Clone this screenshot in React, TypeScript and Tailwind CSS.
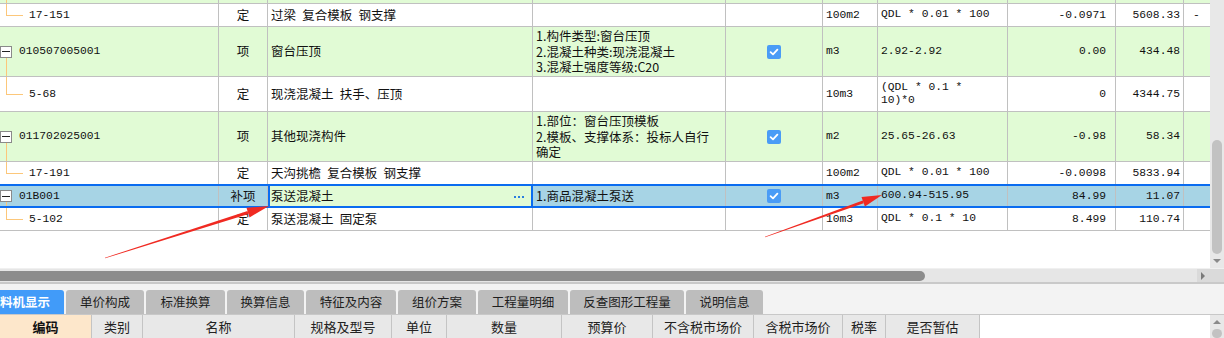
import clsx from "clsx";

const cjk = "font-['Noto_Sans_CJK_SC',sans-serif]";
const mono = "font-['Liberation_Mono','Noto_Sans_CJK_SC',monospace]";

const colW = [
  "w-[219px]",
  "w-[49px]",
  "w-[265px]",
  "w-[193px]",
  "w-[97px]",
  "w-[55px]",
  "w-[130px]",
  "w-[108px]",
  "w-[68px]",
  "w-[26px]",
];

interface Row {
  code: string;
  parent?: boolean;
  type: string;
  name: string;
  feat: string[];
  check?: boolean;
  unit: string;
  formula: string[];
  qty: string;
  price: string;
  last?: string;
  h: string;
  bg: string;
  sel?: boolean;
  noBorder?: boolean;
}

const rows: Row[] = [
  { code: "17-151", type: "定", name: "过梁 复合模板 钢支撑", feat: [], unit: "100m2", formula: ["QDL * 0.01 * 100"], qty: "-0.0971", price: "5608.33", last: "-", h: "h-[23px]", bg: "bg-white" },
  { code: "010507005001", parent: true, type: "项", name: "窗台压顶", feat: ["1.构件类型:窗台压顶", "2.混凝土种类:现浇混凝土", "3.混凝土强度等级:C20"], check: true, unit: "m3", formula: ["2.92-2.92"], qty: "0.00", price: "434.48", h: "h-[50px]", bg: "bg-[#e1fbd5]" },
  { code: "5-68", type: "定", name: "现浇混凝土 扶手、压顶", feat: [], unit: "10m3", formula: ["(QDL * 0.1 *", "10)*0"], qty: "0", price: "4344.75", h: "h-[35px]", bg: "bg-white" },
  { code: "011702025001", parent: true, type: "项", name: "其他现浇构件", feat: ["1.部位：窗台压顶模板", "2.模板、支撑体系：投标人自行", "确定"], check: true, unit: "m2", formula: ["25.65-26.63"], qty: "-0.98", price: "58.34", h: "h-[50px]", bg: "bg-[#e1fbd5]" },
  { code: "17-191", type: "定", name: "天沟挑檐 复合模板 钢支撑", feat: [], unit: "100m2", formula: ["QDL * 0.01 * 100"], qty: "-0.0098", price: "5833.94", h: "h-[22px]", bg: "bg-white", noBorder: true },
  { code: "01B001", parent: true, type: "补项", name: "泵送混凝土", feat: ["1.商品混凝土泵送"], check: true, unit: "m3", formula: ["600.94-515.95"], qty: "84.99", price: "11.07", h: "h-[24px]", bg: "bg-[#a7d4e5]", sel: true },
  { code: "5-102", type: "定", name: "泵送混凝土 固定泵", feat: [], unit: "10m3", formula: ["QDL * 0.1 * 10"], qty: "8.499", price: "110.74", h: "h-[23px]", bg: "bg-white" },
];

function Cell({ i, className, children }: { i: number; className?: string; children?: React.ReactNode }) {
  return (
    <div className={clsx("shrink-0 h-full flex items-center overflow-hidden", i < 9 && "border-r border-[#c0c0c0]", colW[i], className)}>
      {children}
    </div>
  );
}

function Check() {
  return (
    <div className="w-[14px] h-[14px] rounded-[2px] bg-[#4a9cf6] flex items-center justify-center">
      <svg width="10" height="10" viewBox="0 0 10 10">
        <path d="M1.6 5.2 L4 7.4 L8.4 2.6" stroke="white" strokeWidth="1.8" fill="none" strokeLinecap="round" strokeLinejoin="round" />
      </svg>
    </div>
  );
}

// multi-line text kept as one text block
function Lines({ lines }: { lines: string[] }) {
  return (
    <div>
      {lines.map((l, k) => (
        <span key={k}>
          {k > 0 && <br />}
          {l}
        </span>
      ))}
    </div>
  );
}

function CodeCell({ r }: { r: Row }) {
  return (
    <Cell i={0} className="relative">
      {r.parent ? (
        <>
          <div className="absolute left-0 top-1/2 -translate-y-1/2 w-[12px] h-[12px] border border-[#8a8a8a] bg-white flex items-center justify-center">
            <div className="w-[8px] h-px bg-[#222]" />
          </div>
          <div className="absolute left-[6px] top-[calc(50%+6px)] bottom-0 w-px bg-[#fcc77a]" />
          <span className={clsx(mono, "text-[11.3px] text-[#111] pl-[19px]")}>{r.code}</span>
        </>
      ) : (
        <>
          <div className="absolute left-[6px] top-0 h-1/2 w-px bg-[#fcc77a]" />
          <div className="absolute left-[6px] top-1/2 w-[17px] h-px bg-[#fcc77a]" />
          <span className={clsx(mono, "text-[11.3px] text-[#111] pl-[29px]")}>{r.code}</span>
        </>
      )}
    </Cell>
  );
}

function TableRow({ r }: { r: Row }) {
  return (
    <div className={clsx("flex", r.h, r.bg, r.sel ? "border-y-2 border-[#0a6cf0]" : !r.noBorder && "border-b border-[#c0c0c0]")}>
      <CodeCell r={r} />
      <Cell i={1} className={clsx(cjk, "justify-center text-[12.5px] text-[#111]")}>{r.type}</Cell>
      <Cell
        i={2}
        className={clsx(
          cjk,
          "pl-[3px] text-[12.5px] text-[#111] whitespace-pre justify-between",
          r.sel && "bg-[#e1fbd5] shadow-[inset_2px_0_0_#0a6cf0,inset_-1px_0_0_#0a6cf0] border-r-[#0a6cf0]"
        )}
      >
        <span>{r.name.replace(/ /g, "\u2002")}</span>
        {r.sel && (
          <div className="flex gap-[2px] mr-[8px] mt-[1px]">
            <div className="w-[2px] h-[2px] bg-[#2a7ee0]" />
            <div className="w-[2px] h-[2px] bg-[#2a7ee0]" />
            <div className="w-[2px] h-[2px] bg-[#2a7ee0]" />
          </div>
        )}
      </Cell>
      <Cell i={3} className={clsx(cjk, "pl-[3px] text-[12.5px] text-[#111] leading-[15.5px] whitespace-nowrap")}>
        <Lines lines={r.feat} />
      </Cell>
      <Cell i={4} className="justify-center">{r.check && <Check />}</Cell>
      <Cell i={5} className={clsx(mono, "pl-[3px] text-[11.3px] text-[#111]")}>{r.unit}</Cell>
      <Cell i={6} className={clsx(mono, "pl-[3px] text-[11.3px] text-[#111] leading-[13.5px] whitespace-pre")}>
        <Lines lines={r.formula} />
      </Cell>
      <Cell i={7} className={clsx(mono, "justify-end pr-[9px] text-[11.3px] text-[#111]")}>{r.qty}</Cell>
      <Cell i={8} className={clsx(mono, "justify-end pr-[3px] text-[11.3px] text-[#111]")}>{r.price}</Cell>
      <Cell i={9} className={clsx(mono, "pl-[9px] text-[11.3px] text-[#111]")}>{r.last}</Cell>
    </div>
  );
}

const tabs = [
  { label: "单价构成", w: "w-[78px]" },
  { label: "标准换算", w: "w-[79px]" },
  { label: "换算信息", w: "w-[77px]" },
  { label: "特征及内容", w: "w-[90px]" },
  { label: "组价方案", w: "w-[78px]" },
  { label: "工程量明细", w: "w-[90px]" },
  { label: "反查图形工程量", w: "w-[114px]" },
  { label: "说明信息", w: "w-[77px]" },
];

const heads = [
  { label: "类别", w: "w-[51px]" },
  { label: "名称", w: "w-[152px]" },
  { label: "规格及型号", w: "w-[97px]" },
  { label: "单位", w: "w-[55px]" },
  { label: "数量", w: "w-[115px]" },
  { label: "预算价", w: "w-[91px]" },
  { label: "不含税市场价", w: "w-[101px]" },
  { label: "含税市场价", w: "w-[89px]" },
  { label: "税率", w: "w-[43px]" },
  { label: "是否暂估", w: "w-[94px]" },
];

export default function App() {
  return (
    <div className="relative w-[1224px] h-[338px] overflow-hidden bg-white">
      <div className="flex h-[268px]">
        <div className="w-[1210px] overflow-hidden">
          <div className="flex h-[4px] bg-[#e1fbd5] border-b border-[#c0c0c0]">
            {colW.map((_, i) => (
              <Cell key={i} i={i} className="relative">
                {i === 0 && <div className="absolute left-[6px] top-0 bottom-0 w-px bg-[#fcc77a]" />}
              </Cell>
            ))}
          </div>
          {rows.map((r) => (
            <TableRow key={r.code} r={r} />
          ))}
        </div>
        <div className="w-[14px] bg-[#e8e8e8] flex flex-col items-center pt-[140px]">
          <div className="w-[10px] h-[114px] rounded-[5px] bg-[#c2c2c2]" />
          <div className="mt-[5px] w-0 h-0 border-x-[4px] border-x-transparent border-t-[4px] border-t-[#8a8a8a]" />
        </div>
      </div>

      <div className="flex h-[14px] border-t border-[#f0f0f0]">
        <div className="w-[1197px] bg-[#e6e6e6] flex items-center">
          <div className="w-[925px] h-[10px] rounded-r-[5px] bg-[#8c8c8c]" />
        </div>
        <div className="flex-1 bg-[#dadada] flex items-center pl-[4px]">
          <div className="w-0 h-0 border-y-[4px] border-y-transparent border-l-[4px] border-l-[#7a7a7a]" />
        </div>
      </div>
      <div className="h-[2px] bg-[#c9c9c9]" />

      <div className="flex items-end gap-[2px] h-[31px] pt-[6px] bg-[#f3f3f3] border-b border-[#c8c8c8]">
        <div className={clsx(cjk, "w-[64px] h-[24px] rounded-tr-[3px] bg-[#419bf9] text-white font-bold text-[12.5px] flex items-center justify-end pr-[14px] overflow-hidden whitespace-nowrap")}>
          工料机显示
        </div>
        {tabs.map((t) => (
          <div key={t.label} className={clsx(cjk, t.w, "h-[24px] rounded-t-[3px] bg-[#bdbdbd] text-[12.5px] text-[#1e1e1e] flex items-center justify-center whitespace-nowrap")}>
            {t.label}
          </div>
        ))}
      </div>

      <div className="flex h-[23px]">
        <div className={clsx(cjk, "w-[92px] bg-[#fde7cb] border-r border-[#c4c4c4] font-bold text-[13px] text-[#111] flex items-center justify-center")}>编码</div>
        {heads.map((h) => (
          <div key={h.label} className={clsx(cjk, h.w, "bg-[#e8e8e8] border-r border-[#c4c4c4] text-[13px] text-[#222] flex items-center justify-center whitespace-nowrap")}>
            {h.label}
          </div>
        ))}
        <div className="flex-1 bg-white" />
        <div className="w-[14px] bg-[#e8e8e8] flex flex-col items-center pt-[5px]">
          <div className="w-0 h-0 border-x-[4px] border-x-transparent border-b-[4px] border-b-[#8a8a8a]" />
          <div className="mt-[5px] w-[10px] h-[20px] rounded-[5px] bg-[#c2c2c2]" />
        </div>
      </div>

      <svg className="absolute left-0 top-0 pointer-events-none" width="1224" height="338" viewBox="0 0 1224 338">
        <polygon points="105.1,258.3 248.5,214.1 247.5,211.1 104.9,257.7" fill="#f02a22" />
        <polygon points="269,206 249.5,217.4 246.5,207.8" fill="#f02a22" />
        <polygon points="765.1,237.3 863.7,203.2 862.7,200.4 764.9,236.7" fill="#f02a22" />
        <polygon points="882,195 864.9,206.5 861.5,197.1" fill="#f02a22" />
      </svg>
    </div>
  );
}
